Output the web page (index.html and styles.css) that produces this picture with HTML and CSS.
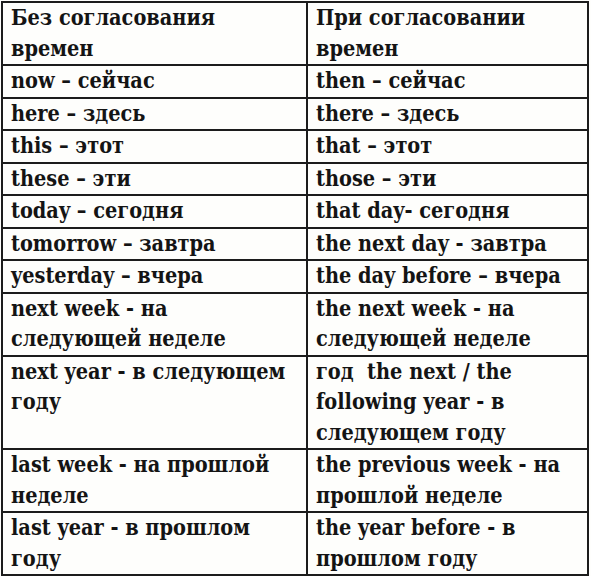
FILE: index.html
```html
<!DOCTYPE html>
<html lang="ru">
<head>
<meta charset="utf-8">
<title>Согласование времен</title>
<link rel="stylesheet" href="styles.css">
</head>
<body>
<table class="grid">
  <colgroup><col class="c1"><col class="c2"></colgroup>
  <tr><td>Без согласования<br>времен</td><td>При согласовании<br>времен</td></tr>
  <tr><td>now – сейчас</td><td>then – сейчас</td></tr>
  <tr><td>here – здесь</td><td>there – здесь</td></tr>
  <tr><td>this – этот</td><td>that – этот</td></tr>
  <tr><td>these – эти</td><td>those – эти</td></tr>
  <tr><td>today – сегодня</td><td>that day- сегодня</td></tr>
  <tr><td>tomorrow – завтра</td><td>the next day - завтра</td></tr>
  <tr><td>yesterday – вчера</td><td>the day before – вчера</td></tr>
  <tr><td>next week - на<br>следующей неделе</td><td>the next week - на<br>следующей неделе</td></tr>
  <tr class="tall"><td>next year - в следующем<br>году</td><td>год&nbsp; the next / the<br>following year - в<br>следующем году</td></tr>
  <tr><td>last week - на прошлой<br>неделе</td><td>the previous week - на<br>прошлой неделе</td></tr>
  <tr><td>last year - в прошлом<br>году</td><td>the year before - в<br>прошлом году</td></tr>
</table>
</body>
</html>
```
FILE: styles.css
```css
html, body {
  margin: 0;
  padding: 0;
  background: #fefefc;
}
.grid {
  margin: 1px 0 0 1px;
  width: 588px;
  border-collapse: collapse;
  table-layout: fixed;
  font-family: "DejaVu Serif Condensed", "DejaVu Serif", serif;
  font-stretch: condensed;
  font-weight: bold;
  font-size: 21.5px;
  line-height: 30.5px;
  color: #141414;
}
.c1 { width: 305px; }
.grid td {
  border: 2px solid #1c1c1c;
  padding: 0 0 0 8px;
  vertical-align: top;
  white-space: nowrap;
}
```
